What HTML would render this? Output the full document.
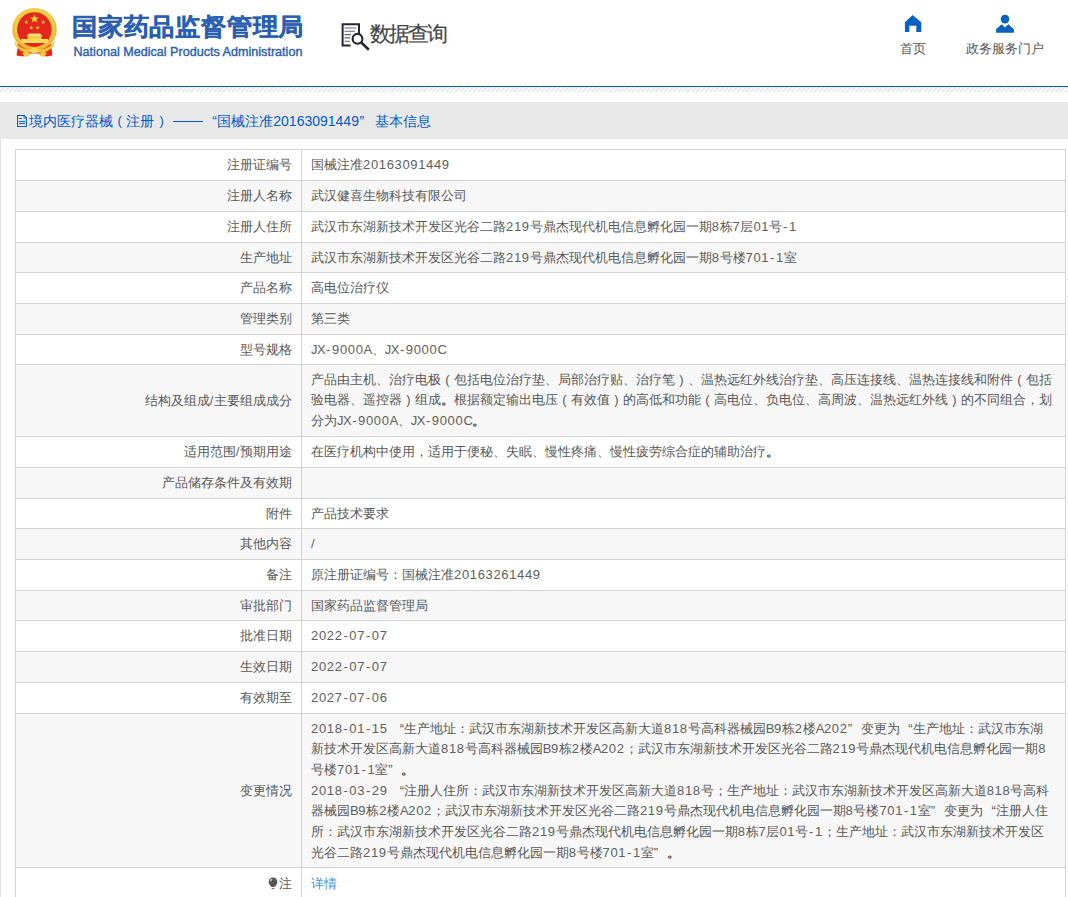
<!DOCTYPE html>
<html><head><meta charset="utf-8">
<style>
html,body{margin:0;padding:0;}
body{width:1068px;height:897px;overflow:hidden;position:relative;background:#fff;font-family:"Liberation Sans",sans-serif;}
.a{position:absolute;white-space:nowrap;}
#tbl{position:absolute;left:15px;top:0;width:1051px;height:897px;}
.r{position:absolute;left:0;width:1049px;border:1px solid #d3d3d3;border-bottom:none;}
.lb{position:absolute;right:774px;font-size:13px;line-height:20.67px;color:#585858;white-space:nowrap;text-align:right;}
.v{position:absolute;left:296px;font-size:13px;line-height:20.67px;color:#585858;white-space:nowrap;}
b.l{font-weight:normal;font-size:13px;letter-spacing:0.65px;color:#606060;}
b.h{font-weight:normal;padding:0 0.9px;}
b.u{font-weight:normal;letter-spacing:-0.45px;}
i{font-style:normal;display:inline-block;}
i.lq{width:13px;text-align:right;}
i.rq{width:13px;text-align:left;}
i.sp{width:3.5px;}
i.pa{width:13px;text-align:center;}
i.dt{color:#333;-webkit-text-stroke:0.3px #333;}
#vline{position:absolute;left:286px;top:149px;width:1px;height:760px;background:#d3d3d3;}
.tt{top:111px;font-size:14px;line-height:20px;color:#005ac8;}
.bulb{display:inline-block;width:10px;height:11px;border-radius:50%;background:#555;margin-right:2px;vertical-align:-1px;}
</style></head><body>
<!-- header -->
<svg class="a" style="left:10px;top:6px" width="50" height="54" viewBox="0 0 50 54">
  <defs><radialGradient id="gr" cx="50%" cy="45%" r="55%"><stop offset="0.75" stop-color="#f6cf45"/><stop offset="1" stop-color="#e9a82a"/></radialGradient></defs>
  <path d="M8.5 36 L6.5 49.5 L13 50.5 L17 47.5 L32 47.5 L36 50.5 L42.5 49.5 L40.5 36 Z" fill="#e1261c"/>
  <ellipse cx="24.5" cy="23.4" rx="22.3" ry="21.4" fill="url(#gr)"/>
  <circle cx="24.4" cy="23.6" r="17.3" fill="#e4261e"/>
  <polygon points="24.5,8.2 25.6,11.5 29,11.5 26.3,13.5 27.3,16.8 24.5,14.8 21.7,16.8 22.7,13.5 20,11.5 23.4,11.5" fill="#f7d43a"/>
  <polygon points="16.3,14 16.9,15.5 18.4,15.5 17.2,16.5 17.6,18 16.3,17.1 15,18 15.4,16.5 14.2,15.5 15.7,15.5" fill="#f7d43a"/>
  <polygon points="33.2,14 33.8,15.5 35.3,15.5 34.1,16.5 34.5,18 33.2,17.1 31.9,18 32.3,16.5 31.1,15.5 32.6,15.5" fill="#f7d43a"/>
  <polygon points="21.3,19.4 21.9,20.9 23.4,20.9 22.2,21.9 22.6,23.4 21.3,22.5 20,23.4 20.4,21.9 19.2,20.9 20.7,20.9" fill="#f7d43a"/>
  <polygon points="27.8,19.4 28.4,20.9 29.9,20.9 28.7,21.9 29.1,23.4 27.8,22.5 26.5,23.4 26.9,21.9 25.7,20.9 27.2,20.9" fill="#f7d43a"/>
  <path d="M16.5 30 L19 27.6 H30 L32.5 30 Z" fill="#f8e07a"/>
  <rect x="17.5" y="30" width="14" height="3" fill="#f3cd3e"/>
  <rect x="11" y="33" width="27" height="4" fill="#f8dc62"/>
  <path d="M4.5 35 Q12 45 20 43 Q24.5 41 29 43 Q37 45 44.5 35 L43.5 39.5 Q37 48 29 46.5 Q24.5 45 20 46.5 Q12 48 5.5 39.5 Z" fill="#f2c23a"/>
  <ellipse cx="24.5" cy="44.5" rx="4.5" ry="2.6" fill="#f7d853"/>
  <path d="M12 47 L17 45.5 L20 49.5 L15 51 Z M37 47 L32 45.5 L29 49.5 L34 51 Z" fill="#f3cc45"/>
</svg>
<div class="a" style="left:72px;top:10px;font-size:25px;line-height:32px;font-weight:bold;color:#2b5fb3;letter-spacing:0.8px;-webkit-text-stroke:0.35px #2b5fb3;transform:scaleY(0.95);transform-origin:0 28px">国家药品监督管理局</div>
<div class="a" style="left:73.5px;top:44.2px;font-size:12.6px;line-height:16px;color:#2c5fb5;-webkit-text-stroke:0.4px #2c5fb5">National Medical Products Administration</div>
<svg class="a" style="left:340px;top:22px" width="32" height="30" viewBox="0 0 32 30">
  <path d="M19 12 V2.2 H2.6 V23.6 H10.5" fill="none" stroke="#262638" stroke-width="2"/>
  <path d="M4.5 6 H16 M4.5 9.3 H15 M4.5 12.6 H11 M4.5 15.9 H10 M4.5 19.2 H10" stroke="#666" stroke-width="1.1"/>
  <circle cx="17.5" cy="16.8" r="4.9" fill="none" stroke="#262638" stroke-width="2.1"/>
  <path d="M21 20.3 L28.8 27.8" stroke="#262638" stroke-width="2.6"/>
</svg>
<div class="a" style="left:369.5px;top:18.5px;font-size:21px;line-height:30px;color:#444;letter-spacing:-1.8px;-webkit-text-stroke:0.2px #444">数据查询</div>
<svg class="a" style="left:904px;top:14px" width="18" height="19" viewBox="0 0 18 19">
  <path d="M0.9 18 V8.2 L8.6 1 L17.3 8.2 V18 H12.3 V11.8 H5.4 V18 Z" fill="#0862c4"/>
</svg>
<div class="a" style="left:900px;top:40px;font-size:13px;line-height:18px;color:#555">首页</div>
<svg class="a" style="left:995px;top:14px" width="20" height="20" viewBox="0 0 20 20">
  <circle cx="10" cy="5.1" r="4.3" fill="#0862c4"/>
  <path d="M1.1 18.8 V15.3 L6.6 10.2 L10 13.4 L13.4 10.2 L18.9 15.3 V18.8 Z" fill="#0862c4"/>
</svg>
<div class="a" style="left:966px;top:40px;font-size:13px;line-height:18px;color:#555">政务服务门户</div>
<div class="a" style="left:0;top:86px;width:1068px;height:1px;background:#0a5fc2"></div>
<svg class="a" style="left:0;top:87px" width="1068" height="5"><defs><pattern id="hp" patternUnits="userSpaceOnUse" width="4.55" height="5"><path d="M-1 6 L5.55 -0.55 M3.55 6 L10.1 -0.55 M-5.55 6 L1 -0.55" stroke="#d6d6d6" stroke-width="0.95"/></pattern></defs><rect width="1068" height="5" fill="url(#hp)"/></svg>
<!-- title band -->
<div class="a" style="left:0;top:102px;width:1068px;height:37px;background:#e8e8e8"></div>
<div class="a" style="left:0;top:139px;width:1px;height:760px;background:#e0e0e0"></div>
<svg class="a" style="left:16px;top:114px" width="12" height="14" viewBox="0 0 12 14">
  <path d="M1.55 1.55 H8.2 L10.4 3.8 V12.4 H1.55 Z" fill="none" stroke="#005ac8" stroke-width="1.05"/><path d="M7.6 1.2 H8.6 L10.8 3.4 V4.6 H7.6 Z" fill="#005ac8"/><circle cx="8.9" cy="3.2" r="0.6" fill="#e8e8e8"/><path d="M3.1 4.5 H5.9 M3.1 7.5 H9 M3.1 9.5 H9" stroke="#005ac8" stroke-width="1"/>
</svg>
<div class="a tt" style="left:28.7px">境内医疗器械</div>
<div class="a tt" style="left:112.7px;width:14px;text-align:center;font-size:13px">(</div>
<div class="a tt" style="left:126.2px">注册</div>
<div class="a tt" style="left:154.7px;width:14px;text-align:center;font-size:13px">)</div>
<div class="a" style="left:173px;top:121px;width:30px;height:1.1px;background:#005ac8"></div>
<div class="a tt" style="left:204px;width:13px;text-align:right">“</div>
<div class="a tt" style="left:217.3px">国械注准<b class="l" style="letter-spacing:0;font-size:14px;color:inherit">20163091449</b></div>
<div class="a tt" style="left:359.5px">”</div>
<div class="a tt" style="left:375px">基本信息</div>
<div id="tbl">
<div class="r" style="top:149px;height:31px;background:#fff"></div>
<div class="lb" style="top:155.06px">注册证编号</div>
<div class="v" style="top:154.80px">国械注准<b class="l">20163091449</b></div>
<div class="r" style="top:180px;height:31px;background:#f7f7f7"></div>
<div class="lb" style="top:186.06px">注册人名称</div>
<div class="v" style="top:185.80px">武汉健喜生物科技有限公司</div>
<div class="r" style="top:211px;height:31px;background:#fff"></div>
<div class="lb" style="top:217.06px">注册人住所</div>
<div class="v" style="top:216.80px">武汉市东湖新技术开发区光谷二路<b class="l">219</b>号鼎杰现代机电信息孵化园一期<b class="l">8</b>栋<b class="l">7</b>层<b class="l">01</b>号<b class="l"><b class="h">-</b>1</b></div>
<div class="r" style="top:242px;height:30px;background:#f7f7f7"></div>
<div class="lb" style="top:247.56px">生产地址</div>
<div class="v" style="top:247.80px">武汉市东湖新技术开发区光谷二路<b class="l">219</b>号鼎杰现代机电信息孵化园一期<b class="l">8</b>号楼<b class="l">701<b class="h">-</b>1</b>室</div>
<div class="r" style="top:272px;height:31px;background:#fff"></div>
<div class="lb" style="top:278.06px">产品名称</div>
<div class="v" style="top:277.80px">高电位治疗仪</div>
<div class="r" style="top:303px;height:31px;background:#f7f7f7"></div>
<div class="lb" style="top:309.06px">管理类别</div>
<div class="v" style="top:308.80px">第三类</div>
<div class="r" style="top:334px;height:30px;background:#fff"></div>
<div class="lb" style="top:339.56px">型号规格</div>
<div class="v" style="top:339.80px"><b class="l"><b class="u">JX</b><b class="h">-</b>9000<b class="u">A</b></b>、<b class="l"><b class="u">JX</b><b class="h">-</b>9000<b class="u">C</b></b></div>
<div class="r" style="top:364px;height:72px;background:#f7f7f7"></div>
<div class="lb" style="top:390.56px">结构及组成<b class="l">/</b>主要组成成分</div>
<div class="v" style="top:369.80px">产品由主机、治疗电极<i class="pa">(</i>包括电位治疗垫、局部治疗贴、治疗笔<i class="pa">)</i>、温热远红外线治疗垫、高压连接线、温热连接线和附件<i class="pa">(</i>包括</div>
<div class="v" style="top:390.47px">验电器、遥控器<i class="pa">)</i>组成<i class="dt">。</i>根据额定输出电压<i class="pa">(</i>有效值<i class="pa">)</i>的高低和功能<i class="pa">(</i>高电位、负电位、高周波、温热远红外线<i class="pa">)</i>的不同组合，划</div>
<div class="v" style="top:411.14px">分为<b class="l"><b class="u">JX</b><b class="h">-</b>9000<b class="u">A</b></b>、<b class="l"><b class="u">JX</b><b class="h">-</b>9000<b class="u">C</b></b><i class="dt">。</i></div>
<div class="r" style="top:436px;height:31px;background:#fff"></div>
<div class="lb" style="top:442.06px">适用范围<b class="l">/</b>预期用途</div>
<div class="v" style="top:441.80px">在医疗机构中使用，适用于便秘、失眠、慢性疼痛、慢性疲劳综合症的辅助治疗<i class="dt">。</i></div>
<div class="r" style="top:467px;height:31px;background:#f7f7f7"></div>
<div class="lb" style="top:473.06px">产品储存条件及有效期</div>
<div class="v" style="top:472.80px"></div>
<div class="r" style="top:498px;height:30px;background:#fff"></div>
<div class="lb" style="top:503.56px">附件</div>
<div class="v" style="top:503.80px">产品技术要求</div>
<div class="r" style="top:528px;height:31px;background:#f7f7f7"></div>
<div class="lb" style="top:534.06px">其他内容</div>
<div class="v" style="top:533.80px"><b class="l">/</b></div>
<div class="r" style="top:559px;height:31px;background:#fff"></div>
<div class="lb" style="top:565.06px">备注</div>
<div class="v" style="top:564.80px">原注册证编号：国械注准<b class="l">20163261449</b></div>
<div class="r" style="top:590px;height:30px;background:#f7f7f7"></div>
<div class="lb" style="top:595.56px">审批部门</div>
<div class="v" style="top:595.80px">国家药品监督管理局</div>
<div class="r" style="top:620px;height:31px;background:#fff"></div>
<div class="lb" style="top:626.06px">批准日期</div>
<div class="v" style="top:625.80px"><b class="l">2022<b class="h">-</b>07<b class="h">-</b>07</b></div>
<div class="r" style="top:651px;height:31px;background:#f7f7f7"></div>
<div class="lb" style="top:657.06px">生效日期</div>
<div class="v" style="top:656.80px"><b class="l">2022<b class="h">-</b>07<b class="h">-</b>07</b></div>
<div class="r" style="top:682px;height:31px;background:#fff"></div>
<div class="lb" style="top:688.06px">有效期至</div>
<div class="v" style="top:687.80px"><b class="l">2027<b class="h">-</b>07<b class="h">-</b>06</b></div>
<div class="r" style="top:713px;height:154px;background:#f7f7f7"></div>
<div class="lb" style="top:780.56px">变更情况</div>
<div class="v" style="top:718.80px"><b class="l">2018<b class="h">-</b>01<b class="h">-</b>15</b><i class="sp"></i><i class="lq">“</i>生产地址：武汉市东湖新技术开发区高新大道<b class="l">818</b>号高科器械园<b class="l"><b class="u">B</b>9</b>栋<b class="l">2</b>楼<b class="l"><b class="u">A</b>202</b><i class="rq">”</i>变更为<i class="lq">“</i>生产地址：武汉市东湖</div>
<div class="v" style="top:739.47px">新技术开发区高新大道<b class="l">818</b>号高科器械园<b class="l"><b class="u">B</b>9</b>栋<b class="l">2</b>楼<b class="l"><b class="u">A</b>202</b>；武汉市东湖新技术开发区光谷二路<b class="l">219</b>号鼎杰现代机电信息孵化园一期<b class="l">8</b></div>
<div class="v" style="top:760.14px">号楼<b class="l">701<b class="h">-</b>1</b>室<i class="rq">”</i><i class="dt">。</i></div>
<div class="v" style="top:780.81px"><b class="l">2018<b class="h">-</b>03<b class="h">-</b>29</b><i class="sp"></i><i class="lq">“</i>注册人住所：武汉市东湖新技术开发区高新大道<b class="l">818</b>号；生产地址：武汉市东湖新技术开发区高新大道<b class="l">818</b>号高科</div>
<div class="v" style="top:801.48px">器械园<b class="l"><b class="u">B</b>9</b>栋<b class="l">2</b>楼<b class="l"><b class="u">A</b>202</b>；武汉市东湖新技术开发区光谷二路<b class="l">219</b>号鼎杰现代机电信息孵化园一期<b class="l">8</b>号楼<b class="l">701<b class="h">-</b>1</b>室<i class="rq">”</i>变更为<i class="lq">“</i>注册人住</div>
<div class="v" style="top:822.15px">所：武汉市东湖新技术开发区光谷二路<b class="l">219</b>号鼎杰现代机电信息孵化园一期<b class="l">8</b>栋<b class="l">7</b>层<b class="l">01</b>号<b class="l"><b class="h">-</b>1</b>；生产地址：武汉市东湖新技术开发区</div>
<div class="v" style="top:842.82px">光谷二路<b class="l">219</b>号鼎杰现代机电信息孵化园一期<b class="l">8</b>号楼<b class="l">701<b class="h">-</b>1</b>室<i class="rq">”</i><i class="dt">。</i></div>
<div class="r" style="top:867px;height:40px;background:#fff"></div>
<div class="lb" style="top:873.50px">注</div>
<svg style="position:absolute;left:252.5px;top:876.5px" width="10" height="13" viewBox="0 0 10 13"><path d="M5 0.6 C7.6 0.6 9.3 2.5 9.3 5 C9.3 7.3 7.8 9.2 6 10 L4 10 C2.2 9.2 0.7 7.3 0.7 5 C0.7 2.5 2.4 0.6 5 0.6 Z" fill="#555"/><path d="M3.6 11.6 H6.4" stroke="#666" stroke-width="1"/><path d="M2.6 4.2 Q2.8 2.6 4.2 2.3" stroke="#fff" stroke-width="1.1" fill="none"/></svg>
<div class="v" style="top:874.00px;color:#3995f2">详情</div>
<div id="vline"></div>
</div>
</body></html>
